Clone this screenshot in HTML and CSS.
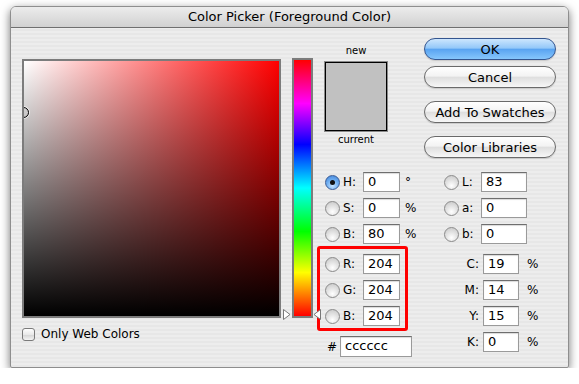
FILE: index.html
```html
<!DOCTYPE html>
<html lang="en">
<head>
  <meta charset="UTF-8" />
  <title>Color Picker (Foreground Color)</title>
  <link rel="stylesheet" href="styles.css">
</head>
<body>
  <div class="window">
    <div class="titlebar">Color Picker (Foreground Color)</div>
    <div class="body">
      <div class="picker">
        <div class="field"><span class="ring"></span></div>
        <label class="webonly"><span class="checkbox"></span>Only Web Colors</label>
      </div>

      <div class="hue">
        <svg class="arrow left" width="8" height="11" viewBox="0 0 8 11"><path d="M0.5 0.5 L7 5.5 L0.5 10.5 Z" fill="#fff" stroke="#777"/></svg>
        <svg class="arrow right" width="8" height="11" viewBox="0 0 8 11"><path d="M7.5 0.5 L1 5.5 L7.5 10.5 Z" fill="#fff" stroke="#777"/></svg>
      </div>

      <div class="mid">
        <div class="swatch">
          <div class="cap">new</div>
          <div class="chip"></div>
          <div class="cap">current</div>
        </div>

        <div class="rows hsb">
          <div class="row"><span class="radio on"></span><span class="lbl">H:</span><span class="input">0</span><span class="unit">°</span></div>
          <div class="row"><span class="radio"></span><span class="lbl">S:</span><span class="input">0</span><span class="unit">%</span></div>
          <div class="row"><span class="radio"></span><span class="lbl">B:</span><span class="input">80</span><span class="unit">%</span></div>
        </div>

        <div class="rows rgb">
          <div class="row"><span class="radio"></span><span class="lbl">R:</span><span class="input">204</span></div>
          <div class="row"><span class="radio"></span><span class="lbl">G:</span><span class="input">204</span></div>
          <div class="row"><span class="radio"></span><span class="lbl">B:</span><span class="input">204</span></div>
        </div>

        <div class="hex"><span class="hash">#</span><span class="input">cccccc</span></div>
      </div>

      <div class="side">
        <div class="buttons">
          <button class="btn default">OK</button>
          <button class="btn">Cancel</button>
          <button class="btn spaced">Add To Swatches</button>
          <button class="btn spaced">Color Libraries</button>
        </div>

        <div class="rows lab">
          <div class="row"><span class="radio"></span><span class="lbl">L:</span><span class="input">83</span></div>
          <div class="row"><span class="radio"></span><span class="lbl">a:</span><span class="input">0</span></div>
          <div class="row"><span class="radio"></span><span class="lbl">b:</span><span class="input">0</span></div>
        </div>

        <div class="rows cmyk">
          <div class="row"><span class="lbl">C:</span><span class="input">19</span><span class="unit">%</span></div>
          <div class="row"><span class="lbl">M:</span><span class="input">14</span><span class="unit">%</span></div>
          <div class="row"><span class="lbl">Y:</span><span class="input">15</span><span class="unit">%</span></div>
          <div class="row"><span class="lbl">K:</span><span class="input">0</span><span class="unit">%</span></div>
        </div>
      </div>
    </div>
  </div>
</body>
</html>
```

FILE: styles.css
```css
* {
  box-sizing: border-box;
}
body, html {
  margin: 0;
  padding: 0;
  background: #fff;
  font-family: 'DejaVu Sans', 'Lucida Grande', sans-serif;
  font-size: 12px;
  color: #000;
}

.window {
  margin: 6px 0 0 10px;
  width: 559px;
  height: 362px;
  border: 1px solid #8e8e8e;
  border-radius: 6px 6px 2px 2px;
  background: repeating-linear-gradient(to bottom, #ededed 0, #ededed 2px, #e7e7e7 2px, #e7e7e7 4px);
  box-shadow: 0 3px 10px rgba(0, 0, 0, 0.55);
  overflow: hidden;
}

.titlebar {
  height: 21px;
  line-height: 20px;
  text-align: center;
  font-size: 13px;
  background: linear-gradient(#ececec, #d1d1d1);
  border-bottom: 1px solid #6f6f6f;
}

.body {
  display: flex;
  padding: 10px 0 0 11px;
}

/* saturation / brightness field */
.picker {
  width: 259px;
  margin-top: 21px;
}
.field {
  position: relative;
  height: 259px;
  border: 2px solid #7c7c7c;
  background:
    linear-gradient(to top, #000, rgba(0, 0, 0, 0)),
    linear-gradient(to right, #fff, #f00);
  overflow: hidden;
}
.ring {
  position: absolute;
  left: -6px;
  top: 46px;
  width: 11px;
  height: 11px;
  border: 1px solid #000;
  border-radius: 50%;
  box-shadow: 0 0 0 1px rgba(255, 255, 255, 0.6);
}
.webonly {
  display: flex;
  align-items: center;
  gap: 6px;
  margin-top: 9px;
  height: 14px;
}
.checkbox {
  width: 13px;
  height: 13px;
  border: 1px solid #7a7a7a;
  border-radius: 3px;
  background: linear-gradient(#fefefe, #e9e9e9 50%, #d6d6d6 55%, #f4f4f4);
}

/* hue strip */
.hue {
  position: relative;
  width: 21px;
  height: 260px;
  margin: 20px 0 0 11px;
  border: 2px solid #7c7c7c;
  background: linear-gradient(to bottom, #f00, #f0f 17%, #00f 33%, #0ff 50%, #0f0 67%, #ff0 83%, #f00);
}
.arrow {
  position: absolute;
  bottom: -4px;
}
.arrow.left { left: -11px; }
.arrow.right { right: -10px; }

/* middle column */
.mid {
  width: 95px;
  margin-left: 4px;
}
.swatch {
  width: 62px;
  margin-left: 8px;
  text-align: center;
}
.cap {
  font-size: 10px;
  line-height: 13px;
}
.swatch .cap:first-child {
  margin-top: 6px;
  margin-bottom: 5px;
}
.swatch .cap:last-child {
  margin-top: 2px;
}
.chip {
  height: 69px;
  background: #c1c1c1;
  border: 1px solid #000;
  outline: 1px solid #8a8a8a;
}

.rows {
  display: flex;
  flex-direction: column;
  gap: 6px;
}
.row {
  display: grid;
  align-items: center;
  height: 20px;
}
.hsb {
  margin-top: 26px;
  padding-left: 8px;
}
.hsb .row, .rgb .row {
  grid-template-columns: 15px 3px 20px 37px 5px auto;
}
.row .radio { grid-column: 1; }
.row .lbl { grid-column: 3; }
.row .input { grid-column: 4; }
.row .unit { grid-column: 6; }

.rgb {
  margin-top: 2px;
  width: 91px;
  padding: 5px 0 2px 5px;
  border: 3px solid #f00;
  border-radius: 3px;
}

.hex {
  display: flex;
  align-items: center;
  margin-top: 5px;
}
.hash {
  width: 23px;
  padding-left: 10px;
}
.hex .input {
  width: 72px;
  height: 21px;
}

/* inputs and radios */
.input {
  height: 20px;
  line-height: 18px;
  padding-left: 4px;
  font-size: 13px;
  background: #fff;
  border: 1px solid #9a9a9a;
  border-top-color: #6e6e6e;
  box-shadow: inset 0 1px 1px rgba(0, 0, 0, 0.15);
}
.radio {
  width: 15px;
  height: 15px;
  border-radius: 50%;
  border: 1px solid #8a8a8a;
  background: radial-gradient(circle at 50% 75%, #fff 0, #e4e4e4 45%, #c4c4c4 100%);
}
.radio.on {
  position: relative;
  border-color: #3a5c95;
  background: radial-gradient(circle at 50% 75%, #c6e4ff 0, #6eaef1 50%, #3c7fd6 100%);
}
.radio.on::after {
  content: "";
  position: absolute;
  left: 4px;
  top: 4px;
  width: 5px;
  height: 5px;
  border-radius: 50%;
  background: #111;
}

/* right column */
.side {
  width: 132px;
  margin-left: 12px;
}
.buttons {
  display: flex;
  flex-direction: column;
}
.btn {
  height: 22px;
  padding: 0;
  font-family: inherit;
  font-size: 13px;
  color: #000;
  border: 1px solid #6a6a6a;
  border-radius: 11px;
  background: linear-gradient(#ffffff, #f3f3f3 45%, #dfdfdf 52%, #f7f7f7);
  box-shadow: 0 1px 1px rgba(0, 0, 0, 0.15);
}
.btn + .btn { margin-top: 6px; }
.btn.spaced { margin-top: 13px; }
.btn.default {
  border-color: #34558f;
  background: linear-gradient(#cde6fd, #94c8f9 45%, #5aa4f1 52%, #86c6fc);
}

.lab {
  margin-top: 14px;
  padding-left: 20px;
}
.lab .row {
  grid-template-columns: 15px 3px 19px 46px;
}
.cmyk {
  margin-top: 10px;
}
.cmyk .row {
  grid-template-columns: 55px 4px 36px 8px auto;
}
.cmyk .lbl {
  grid-column: 1;
  text-align: right;
}
.cmyk .input { grid-column: 3; }
.cmyk .unit { grid-column: 5; }
```
